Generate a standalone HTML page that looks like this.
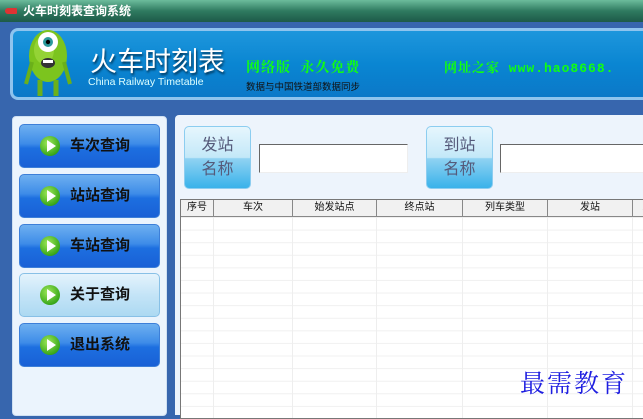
<!DOCTYPE html><html><head><meta charset="utf-8"><style>
*{margin:0;padding:0;box-sizing:border-box}
body{width:643px;height:412px;overflow:hidden;position:relative;background:#3766ae;font-family:"Liberation Sans","Noto Sans CJK SC",sans-serif}
.tb{position:absolute;left:0;top:0;width:643px;height:22px;background:linear-gradient(#6cbc9c,#2f7a60 50%,#1d5a48);color:#fff;font-weight:bold;font-size:12px;line-height:22px;padding-left:23px}
.tb i{position:absolute;left:5px;top:8px;width:12px;height:6px;background:#d33;border-radius:3px 1px 1px 3px}
.hd{position:absolute;left:10px;top:28px;width:640px;height:72px;border:3px solid #8fc4ee;border-right:none;border-radius:8px 0 0 8px;background:linear-gradient(#1e96dc,#0a86d2 50%,#0b78c8)}
.t1{position:absolute;left:90px;top:40px;color:#fff;font-size:27px;text-shadow:1px 2px 2px #035}
.t2{position:absolute;left:88px;top:76px;color:#dff;font-size:10.5px}
.g{position:absolute;top:57px;color:#1f1;font-family:"Liberation Mono","Noto Serif CJK SC",serif;font-weight:bold;font-size:14px;letter-spacing:1px;white-space:nowrap}
.t3{position:absolute;left:246px;top:79px;font-size:9.5px;color:#111}
.lp{position:absolute;left:12px;top:116px;width:155px;height:300px;background:#ebf4fd;border:1px solid #cfe0f2;border-radius:4px}
.b{position:absolute;left:19px;width:141px;height:44px;border:1px solid #3d7fd8;border-radius:5px;background:linear-gradient(#6eb0f0,#3d8be8 45%,#1d6fe0 55%,#1960d6);font-size:15px;font-weight:bold;color:#111;line-height:42px;padding-left:50px}
.b.l{background:linear-gradient(#e4f3fc,#c4e4f7 50%,#acd9f2);border-color:#88c0e6}
.b:before{content:"";position:absolute;left:20px;top:11px;width:20px;height:20px;border-radius:50%;background:radial-gradient(circle at 40% 35%,#9ee85a,#3aa81a 70%,#207a10)}
.b:after{content:"";position:absolute;left:27px;top:15px;border-left:9px solid #fff;border-top:6px solid transparent;border-bottom:6px solid transparent}
.rp{position:absolute;left:175px;top:115px;width:470px;height:300px;background:#edf4fc;border-radius:4px 0 0 0}
.sb{position:absolute;top:126px;width:67px;height:63px;border:1px solid #8ccdf0;border-radius:5px;background:linear-gradient(#e6f6fd,#c3e8f8 50%,#8fd2f2 52%,#39b2ea);color:#555a7a;font-size:16px;text-align:center;line-height:24px;padding-top:7px}
.in{position:absolute;top:144px;height:29px;background:#fff;border:1px solid #666;border-right-color:#eee;border-bottom-color:#eee}
.tbl{position:absolute;left:180px;top:199px;width:470px;height:220px;border:1px solid #777;background:#fff;background-image:linear-gradient(#f0f0f0 1px,transparent 1px);background-size:100% 12.6px;background-position:0 17px}
.hr{position:absolute;left:0;top:0;height:17px;display:flex;border-bottom:1px solid #888;background:#f1f1f1}
.hr div{height:16px;border-right:1px solid #888;font-size:10px;text-align:center;line-height:16px;color:#111}
.cl{position:absolute;top:17px;bottom:0;width:1px;background:#eee}
.wm{position:absolute;left:520px;top:364px;font-family:"Noto Serif CJK SC",serif;color:#1e1ee0;font-size:25px;letter-spacing:2px}
</style></head><body>
<div class="tb"><i></i>火车时刻表查询系统</div>
<div class="hd"></div>
<svg style="position:absolute;left:20px;top:22px" width="56" height="76" viewBox="0 0 56 76">
<ellipse cx="28" cy="34" rx="19" ry="26" fill="#7cc41e"/><ellipse cx="24" cy="28" rx="10" ry="14" fill="#a5dd45" opacity=".6"/>
<circle cx="28" cy="20" r="10" fill="#fff"/><circle cx="28" cy="20" r="5" fill="#2a9a9a"/><circle cx="28" cy="20" r="2.2" fill="#000"/>
<ellipse cx="28" cy="41" rx="7" ry="5" fill="#333"/><rect x="23" y="38" width="10" height="3" fill="#fff"/>
<path d="M12 40 L6 62 M44 40 L50 62" stroke="#6bb01a" stroke-width="4"/><path d="M20 58 L20 74 M36 58 L36 74" stroke="#6bb01a" stroke-width="5"/>
</svg>
<div class="t1">火车时刻表</div>
<div class="t2">China Railway Timetable</div>
<div class="g" style="left:246px">网络版 永久免费</div>
<div class="g" style="left:444px;font-size:13px">网址之家 www.hao8668.</div>
<div class="t3">数据与中国铁道部数据同步</div>
<div class="lp"></div>
<div class="b" style="top:124px">车次查询</div>
<div class="b" style="top:174px">站站查询</div>
<div class="b" style="top:224px">车站查询</div>
<div class="b l" style="top:273px">关于查询</div>
<div class="b" style="top:323px">退出系统</div>
<div class="rp"></div>
<div class="sb" style="left:184px">发站<br>名称</div>
<div class="in" style="left:259px;width:149px"></div>
<div class="sb" style="left:426px">到站<br>名称</div>
<div class="in" style="left:500px;width:150px"></div>
<div class="tbl">
<div class="hr"><div style="width:33px">序号</div><div style="width:79px">车次</div><div style="width:84px">始发站点</div><div style="width:86px">终点站</div><div style="width:85px">列车类型</div><div style="width:85px">发站</div><div style="width:30px">发</div></div>
<div class="cl" style="left:32px"></div><div class="cl" style="left:111px"></div><div class="cl" style="left:195px"></div><div class="cl" style="left:281px"></div><div class="cl" style="left:366px"></div><div class="cl" style="left:451px"></div>
</div>
<div class="wm">最需教育</div>
</body></html>
